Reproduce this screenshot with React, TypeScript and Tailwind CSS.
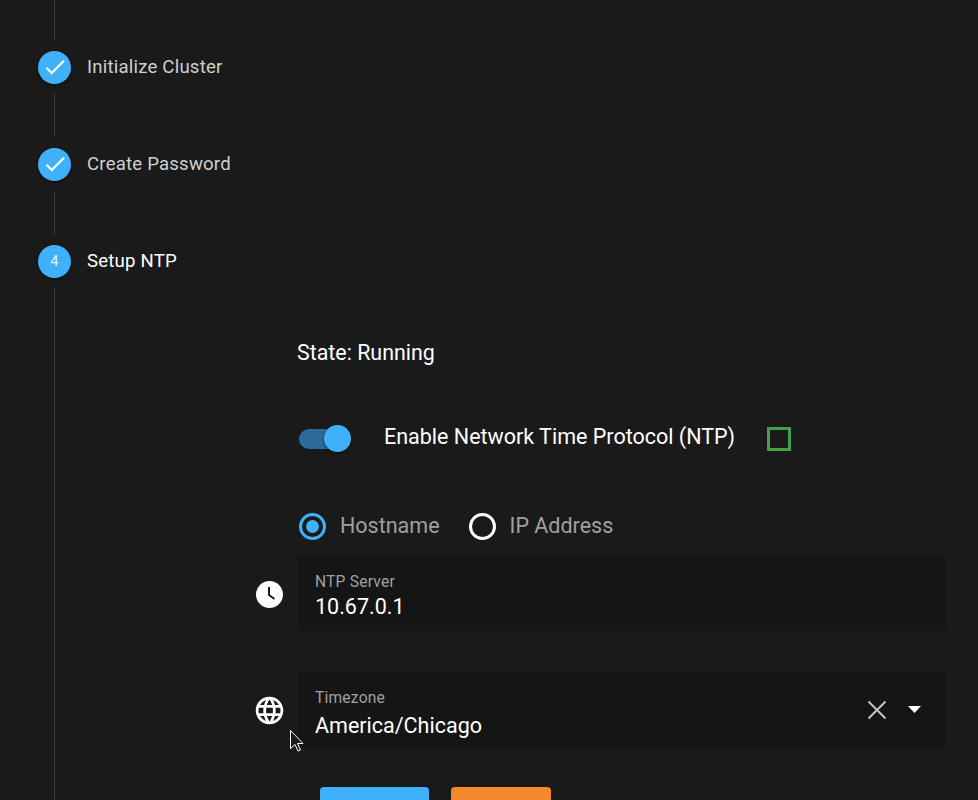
import { FC } from "react";
import { MdLanguage } from "react-icons/md";

const Connector: FC<{ height: string }> = ({ height }) => (
  <div className={`ml-[54px] w-px bg-[#3a3a3a] ${height}`} />
);

const Step: FC<{ label: string; number?: string }> = ({ label, number }) => (
  <div className="flex h-[54px] items-center pl-[38px]">
    <div className="flex h-[33px] w-[33px] items-center justify-center rounded-full bg-[#3fb1fb] text-[14px] text-[#e8f5ff] shadow-[0_1px_3px_rgba(0,0,0,0.5)]">
      {number ?? (
        <svg viewBox="0 0 24 24" className="h-[26px] w-[26px]" fill="#ffffff">
          <path d="M9 16.17L4.83 12l-1.42 1.41L9 19 21 7l-1.41-1.41z" />
        </svg>
      )}
    </div>
    <span className={`ml-4 text-[18.6px] leading-[24px] tracking-[0.2px] ${number ? "text-white" : "text-[#cfcfcf]"}`}>
      {label}
    </span>
  </div>
);

const Field: FC<{ label: string; value: string; valueGap: string; children?: React.ReactNode }> = ({ label, value, valueGap, children }) => (
  <div className="flex h-[75px] w-[648px] items-center justify-between rounded bg-[#151515] pl-[17px]">
    <div className="self-start pt-[17px]">
      <div className="text-[15.6px] leading-[18px] tracking-[0.2px] text-[#a0a0a0]">{label}</div>
      <div className={`text-[21.5px] leading-[28px] text-white ${valueGap}`}>{value}</div>
    </div>
    {children}
  </div>
);

const App: FC = () => {
  return (
    <div className="relative h-[800px] w-[978px] overflow-hidden bg-[#1a1a1a] font-['Roboto',sans-serif]">
      <Connector height="h-[40px]" />
      <Step label="Initialize Cluster" />
      <Connector height="h-[43px]" />
      <Step label="Create Password" />
      <Connector height="h-[43px]" />
      <Step label="Setup NTP" number="4" />

      {/* Contenido del paso */}
      <div className="ml-[54px] h-[512px] border-l border-[#3a3a3a] pl-[201px]">
        <div className="ml-[41px] pt-[52px] text-[21.4px] leading-[26px] text-white">State: Running</div>

        <div className="ml-[43px] mt-[55px] flex h-[36px] items-center">
          <div className="relative h-[20px] w-[45px] rounded-full bg-[#2d6c9a]">
            <div className="absolute -top-[4px] left-[25px] h-[27px] w-[27px] rounded-full bg-[#3fb1fb] shadow-[0_1px_3px_rgba(0,0,0,0.6)]" />
          </div>
          <span className="mb-[4px] ml-[40px] text-[21.5px] text-white">Enable Network Time Protocol (NTP)</span>
          <div className="ml-[32px] h-[24px] w-[24px] border-[3px] border-[#43a047]" />
        </div>

        <div className="ml-[43px] mt-[55px] flex h-[28px] items-center text-[21.5px] text-[#a0a0a0]">
          <div className="flex h-[27px] w-[27px] items-center justify-center rounded-full border-[3px] border-[#3fb1fb]">
            <div className="h-[13px] w-[13px] rounded-full bg-[#3fb1fb]" />
          </div>
          <span className="ml-[14px]">Hostname</span>
          <div className="ml-[29px] h-[27px] w-[27px] rounded-full border-[3px] border-white" />
          <span className="ml-[14px]">IP Address</span>
        </div>

        <div className="mt-[16px] flex items-center">
          <div className="mt-[2px] flex w-[42px] shrink-0 items-center pr-[14px]">
            <svg viewBox="0 0 27 27" className="h-[27px] w-[27px]">
              <circle cx="13.5" cy="13.5" r="13.5" fill="#ffffff" />
              <path d="M13 6v8l5.5 4" fill="none" stroke="#1a1a1a" strokeWidth="2" />
            </svg>
          </div>
          <Field label="NTP Server" value="10.67.0.1" valueGap="mt-[2px]" />
        </div>

        <div className="mt-[41px] flex items-center">
          <div className="mt-[2px] flex w-[42px] shrink-0 items-center pr-[14px]">
            <MdLanguage className="-m-[3px] h-[33px] w-[33px] shrink-0 text-white" />
          </div>
          <Field label="Timezone" value="America/Chicago" valueGap="mt-[5px]">
            <div className="flex items-center pr-[25px]">
              <svg viewBox="0 0 20 20" className="h-[20px] w-[20px]" fill="none" stroke="#c4c4c4" strokeWidth="2">
                <path d="M1.5 1.5l17 17M18.5 1.5l-17 17" />
              </svg>
              <svg viewBox="0 0 13 7" className="ml-[21px] h-[7px] w-[13px]" fill="#ffffff">
                <path d="M0 0h13L6.5 7z" />
              </svg>
            </div>
          </Field>
        </div>

        <div className="ml-[64px] mt-[40px] flex gap-[22px]">
          <div className="h-[40px] w-[109px] rounded bg-[#3fb1fb]" />
          <div className="h-[40px] w-[100px] rounded bg-[#f5872c]" />
        </div>
      </div>

      {/* Puntero del ratón */}
      <svg viewBox="0 0 16 24" className="absolute left-[289px] top-[729px] h-[24px] w-[16px]" fill="#1a1a1a" stroke="#ffffff" strokeWidth="1">
        <path d="M1.5 1.5v18l4.5-4 3 6.5 2.5-1-3-6.5h5.5z" />
      </svg>
    </div>
  );
};

export default App;
